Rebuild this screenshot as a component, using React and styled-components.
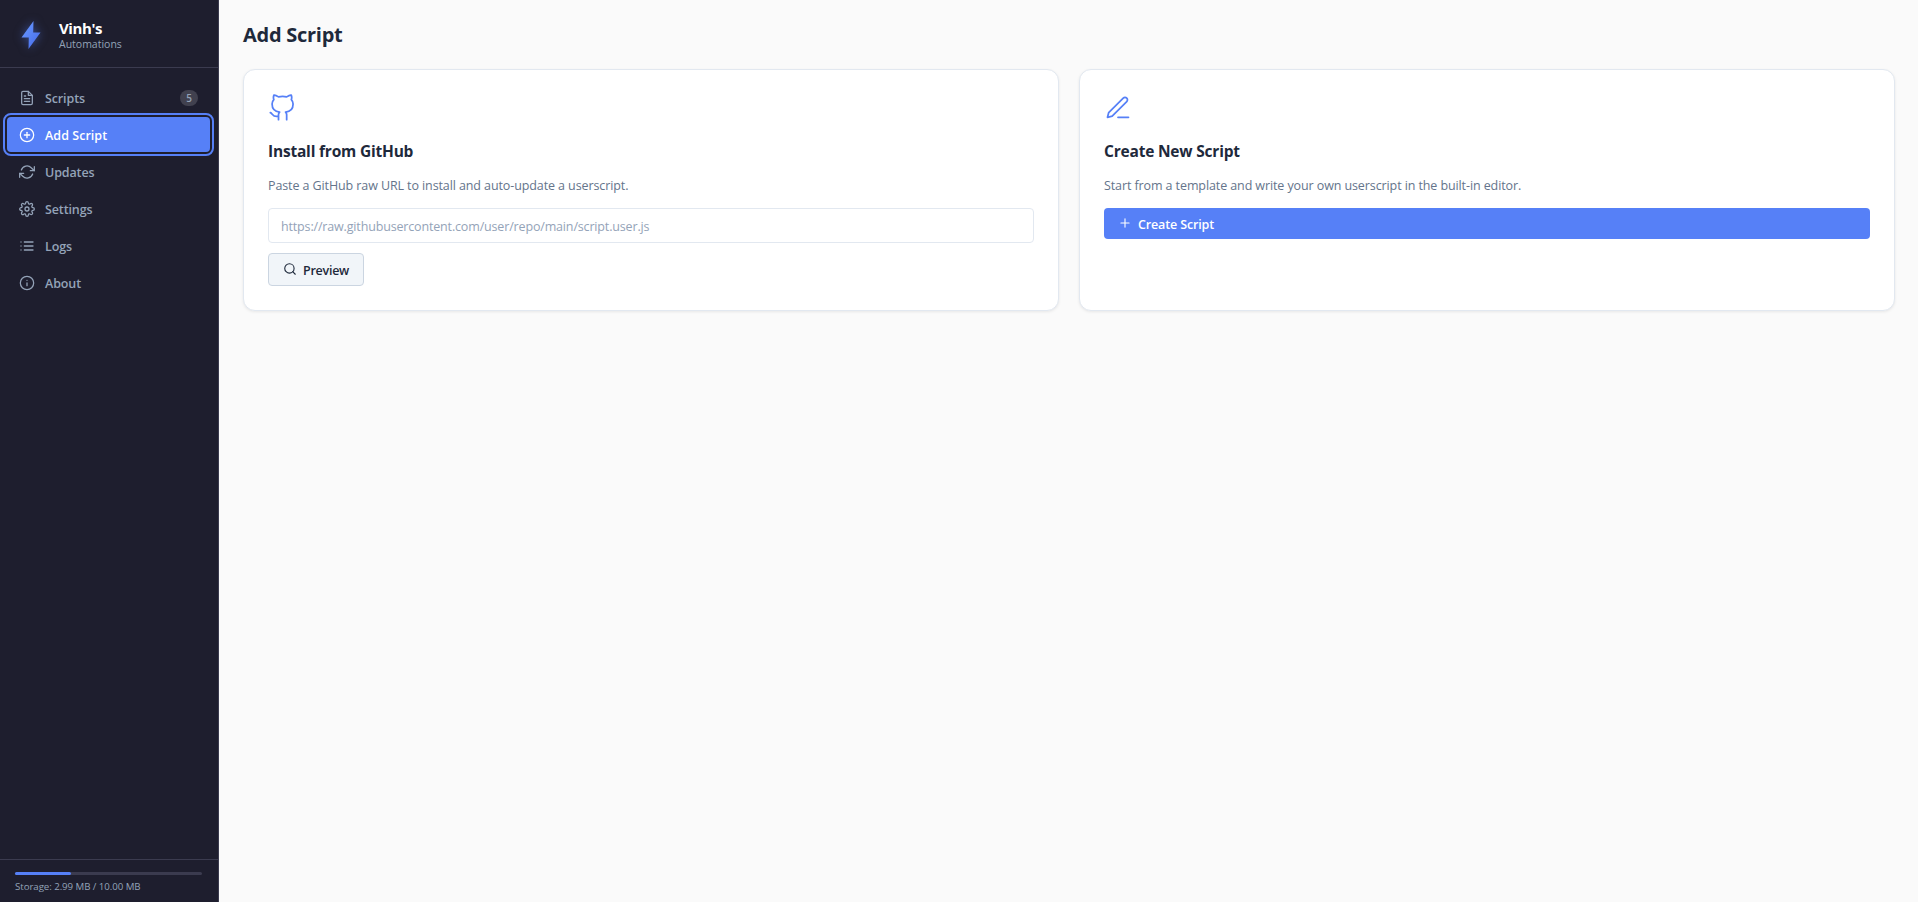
import React, { useState } from 'react'
import styled, { createGlobalStyle } from 'styled-components'
import {
  FiFileText, FiPlusCircle, FiRefreshCw, FiSettings, FiList, FiInfo,
  FiGithub, FiEdit3, FiSearch, FiPlus,
} from 'react-icons/fi'

const GlobalStyle = createGlobalStyle`
  * {
    box-sizing: border-box;
  }

  body {
    margin: 0;
    background: #fafafa;
    font-family: 'Open Sans', 'Noto Sans', sans-serif;
    font-size: 12.5px;
    letter-spacing: -0.1px;
    color: #1e293b;
    overflow: hidden;
  }

  svg {
    flex-shrink: 0;
  }
`;

const Layout = styled.div`
  display: flex;
  height: 100vh;
`;

const Sidebar = styled.aside`
  display: flex;
  flex-direction: column;
  width: 219px;
  flex-shrink: 0;
  background: #1e1e2e;
  border-right: 1px solid #3b3b4f;
`;

const Brand = styled.div`
  display: flex;
  align-items: center;
  gap: 12px;
  height: 68px;
  padding: 2px 16px 0 15px;
  border-bottom: 1px solid #3b3b4f;
`;

const Logo = styled.svg`
  width: 32px;
  height: 32px;
  filter: drop-shadow(0 0 5px rgba(86, 128, 247, 0.5));
`;

const BrandText = styled.div`
  padding-top: 2px;
`;

const BrandName = styled.div`
  font-size: 15px;
  font-weight: 700;
  line-height: 17px;
  letter-spacing: -0.4px;
  color: #ffffff;
`;

const BrandSub = styled.div`
  font-size: 10.5px;
  line-height: 14px;
  letter-spacing: 0;
  color: #94a3b8;
`;

const Nav = styled.nav`
  display: flex;
  flex-direction: column;
  flex: 1;
  gap: 2px;
  padding: 12px 8px 12px 7px;
`;

const NavItem = styled.button`
  display: flex;
  align-items: center;
  gap: 10px;
  height: 35px;
  padding: 0 12px;
  border: none;
  border-radius: 4px;
  background: ${({ $active }) => ($active ? '#5680f7' : 'transparent')};
  outline: ${({ $active }) => ($active ? '2px solid #5680f7' : 'none')};
  outline-offset: 2px;
  color: ${({ $active }) => ($active ? '#ffffff' : '#94a3b8')};
  font-family: inherit;
  font-size: 12.5px;
  font-weight: 600;
  letter-spacing: ${({ $active }) => ($active ? '0.04px' : '-0.12px')};
  text-align: left;

  svg {
    width: 16px;
    height: 16px;
    stroke-width: 1.9;
  }
`;

const Label = styled.span`
  padding-top: 2px;
`;

const Count = styled.span`
  margin-left: auto;
  min-width: 18px;
  height: 16px;
  border-radius: 8px;
  background: #41414f;
  font-size: 10px;
  line-height: 17px;
  text-align: center;
`;

const Storage = styled.div`
  height: 43px;
  padding: 12px 16px 0 15px;
  border-top: 1px solid #3b3b4f;
  font-size: 9.7px;
  line-height: 14px;
  letter-spacing: -0.06px;
  color: #94a3b8;
`;

const StorageBar = styled.div`
  height: 3px;
  margin-bottom: 5px;
  border-radius: 2px;
  background: #3b3b4f;
`;

const StorageFill = styled.div`
  height: 100%;
  border-radius: 2px;
  background: #5680f7;
`;

const Main = styled.main`
  flex: 1;
  padding: 21px 23px 24px 24px;
`;

const PageTitle = styled.h1`
  margin: 0 0 20px;
  font-size: 20px;
  font-weight: 700;
  line-height: 28px;
  letter-spacing: -0.26px;
`;

const Cards = styled.div`
  display: grid;
  grid-template-columns: repeat(2, 1fr);
  gap: 20px;
`;

const Card = styled.section`
  display: flex;
  flex-direction: column;
  height: 242px;
  padding: 24px;
  background: #ffffff;
  border: 1px solid #e2e8f0;
  border-radius: 12px;
  box-shadow: 0 1px 3px rgba(0, 0, 0, 0.08);

  > svg {
    width: 28px;
    height: 28px;
    stroke-width: 1.5;
    color: #5680f7;
  }

  h3 {
    margin: 18px 0 0;
    font-size: 15.5px;
    font-weight: 700;
    line-height: 22px;
    letter-spacing: -0.2px;
  }

  p {
    margin: 14px 0 13px;
    font-size: 12.5px;
    line-height: 19px;
    color: #64748b;
  }
`;

const UrlInput = styled.input`
  height: 35px;
  margin-bottom: 10px;
  padding: 2px 12px 0;
  border: 1px solid #e2e8f0;
  border-radius: 4px;
  font-family: inherit;
  font-size: 12.5px;
  letter-spacing: -0.16px;

  &::placeholder {
    color: #94a3b8;
  }
`;

const Button = styled.button`
  display: flex;
  align-items: center;
  align-self: ${({ $primary }) => ($primary ? 'stretch' : 'flex-start')};
  gap: 6px;
  height: ${({ $primary }) => ($primary ? '31px' : '33px')};
  padding: 0 14px;
  border: ${({ $primary }) => ($primary ? 'none' : '1px solid #cbd5e1')};
  border-radius: 4px;
  background: ${({ $primary }) => ($primary ? '#5680f7' : '#f1f5f9')};
  color: ${({ $primary }) => ($primary ? '#ffffff' : '#1e293b')};
  font-family: inherit;
  font-size: 12.5px;
  font-weight: 600;
  letter-spacing: ${({ $primary }) => ($primary ? '-0.14px' : '-0.26px')};

  svg {
    width: 14px;
    height: 14px;
    margin-bottom: 2px;
    stroke-width: 1.9;
  }
`;

const navItems = [
  { label: 'Scripts', icon: FiFileText, count: 5 },
  { label: 'Add Script', icon: FiPlusCircle },
  { label: 'Updates', icon: FiRefreshCw },
  { label: 'Settings', icon: FiSettings },
  { label: 'Logs', icon: FiList },
  { label: 'About', icon: FiInfo },
]

const used = 2.99
const quota = 10

const App = () => {
  const [page, setPage] = useState('Add Script')
  const [url, setUrl] = useState('')

  return (
    <>
      <GlobalStyle />
      <Layout>
        <Sidebar>
          <Brand>
            <Logo viewBox="0 0 32 32">
              <defs>
                <linearGradient id="bolt" x1="0" y1="0" x2="1" y2="1">
                  <stop offset="0" stopColor="#6b9cff" />
                  <stop offset="1" stopColor="#4468ea" />
                </linearGradient>
              </defs>
              <path d="M18.5 2 6.5 18.5h7.3L13.5 30 25.5 13.5h-7.3z" fill="url(#bolt)" />
            </Logo>
            <BrandText>
              <BrandName>Vinh's</BrandName>
              <BrandSub>Automations</BrandSub>
            </BrandText>
          </Brand>
          <Nav>
            {navItems.map(({ label, icon: Icon, count }) => (
              <NavItem key={label} $active={label === page} onClick={() => setPage(label)}>
                <Icon />
                <Label>{label}</Label>
                {count && <Count>{count}</Count>}
              </NavItem>
            ))}
          </Nav>
          <Storage>
            <StorageBar>
              <StorageFill style={{ width: `${(used / quota) * 100}%` }} />
            </StorageBar>
            Storage: {used.toFixed(2)} MB / {quota.toFixed(2)} MB
          </Storage>
        </Sidebar>

        <Main>
          <PageTitle>Add Script</PageTitle>
          <Cards>
            <Card>
              <FiGithub />
              <h3>Install from GitHub</h3>
              <p>Paste a GitHub raw URL to install and auto-update a userscript.</p>
              <UrlInput
                value={url}
                onChange={(e) => setUrl(e.target.value)}
                placeholder="https://raw.githubusercontent.com/user/repo/main/script.user.js"
              />
              <Button><FiSearch /><Label>Preview</Label></Button>
            </Card>
            <Card>
              <FiEdit3 />
              <h3>Create New Script</h3>
              <p>Start from a template and write your own userscript in the built-in editor.</p>
              <Button $primary><FiPlus /><Label>Create Script</Label></Button>
            </Card>
          </Cards>
        </Main>
      </Layout>
    </>
  )
}

export default App
